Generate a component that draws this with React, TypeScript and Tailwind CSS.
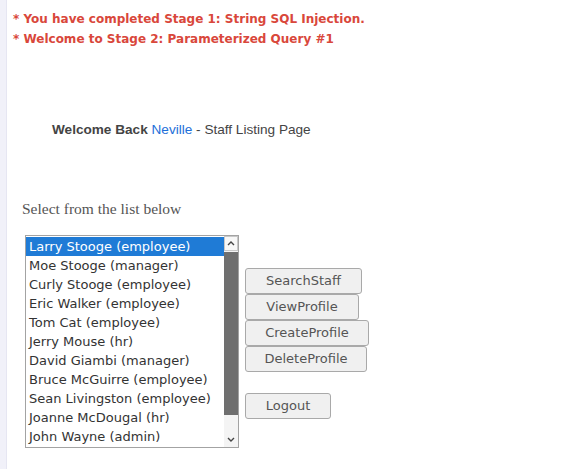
const STAFF = [
  "Larry Stooge (employee)",
  "Moe Stooge (manager)",
  "Curly Stooge (employee)",
  "Eric Walker (employee)",
  "Tom Cat (employee)",
  "Jerry Mouse (hr)",
  "David Giambi (manager)",
  "Bruce McGuirre (employee)",
  "Sean Livingston (employee)",
  "Joanne McDougal (hr)",
  "John Wayne (admin)",
];

const BTN =
  "h-[26px] rounded-[3px] border border-[#a9a9a9] bg-[#f0f0f0] text-center text-[13px] leading-[24px] text-[#555]";

export default function App() {
  return (
    <div className="flex h-[469px] w-full bg-white font-['DejaVu_Sans',sans-serif]">
      <div className="w-[7px] shrink-0 border-r border-[#e6e6f2] bg-[#f1f1f9]" />

      <div className="flex-1">
        <div className="pl-[6px] pt-[9px] text-[12px] font-bold leading-[20px] text-[#d9473b]">
          <p>* You have completed Stage 1: String SQL Injection.</p>
          <p>* Welcome to Stage 2: Parameterized Query #1</p>
        </div>

        <p className="ml-[45px] mt-[71px] font-['Liberation_Sans',sans-serif] text-[13.6px] leading-[20px] text-[#444]">
          <span className="font-bold">Welcome Back</span>{" "}
          <span className="text-[#1e6fd9]">Neville</span> - Staff Listing Page
        </p>

        <p className="ml-[15px] mt-[59px] font-['Liberation_Serif',serif] text-[15.5px] leading-[20px] text-[#555]">
          Select from the list below
        </p>

        <div className="ml-[18px] mt-[16px] flex items-start">
          <div className="flex h-[213px] w-[214px] border border-[#a3a3a3] bg-white">
            <ul className="flex-1 pt-px text-[13px] text-[#333]">
              {STAFF.map((name, i) => (
                <li
                  key={name}
                  className={
                    i === 0
                      ? "h-[19px] whitespace-nowrap bg-[#1f7bd6] pl-[3px] leading-[19px] text-white"
                      : "h-[19px] whitespace-nowrap pl-[3px] leading-[19px]"
                  }
                >
                  {name}
                </li>
              ))}
            </ul>
            <div className="flex w-[14px] flex-col bg-[#f4f4f4]">
              <div className="flex h-[15px] items-center justify-center border border-[#c8c8c8] bg-[#f8f8f8]">
                <svg width="8" height="5" viewBox="0 0 8 5">
                  <path d="M1 4 L4 1 L7 4" fill="none" stroke="#444" strokeWidth="1.4" />
                </svg>
              </div>
              <div className="mt-[1px] h-[163px] bg-[#6f6f6f]" />
              <div className="flex-1" />
              <div className="flex h-[15px] items-center justify-center">
                <svg width="8" height="5" viewBox="0 0 8 5">
                  <path d="M1 1 L4 4 L7 1" fill="none" stroke="#444" strokeWidth="1.4" />
                </svg>
              </div>
            </div>
          </div>

          <div className="ml-[6px] mt-[33px] flex flex-col items-start">
            <button className={`${BTN} w-[117px]`}>SearchStaff</button>
            <button className={`${BTN} w-[114px]`}>ViewProfile</button>
            <button className={`${BTN} w-[124px]`}>CreateProfile</button>
            <button className={`${BTN} w-[122px]`}>DeleteProfile</button>
            <button className={`${BTN} mt-[21px] w-[86px]`}>Logout</button>
          </div>
        </div>
      </div>
    </div>
  );
}
